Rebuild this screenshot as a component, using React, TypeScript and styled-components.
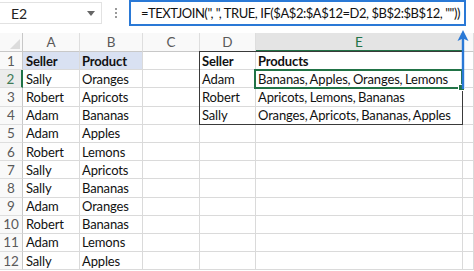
import React, { FC } from 'react'
import styled, { createGlobalStyle, css } from 'styled-components'

const GlobalStyle = createGlobalStyle`
  html, body {
    margin: 0;
    padding: 0;
    background: #ffffff;
  }
  body {
    font-family: Lato, 'Liberation Sans', sans-serif;
    width: 474px;
    height: 271px;
    overflow: hidden;
  }
`

const GREEN = '#217346'
const BLUE = '#2a79d6'
const GRID = '#dadada'

const Page = styled.div`
  position: relative;
  width: 474px;
  height: 271px;
  overflow: hidden;
`

const FormulaBar = styled.div`
  display: flex;
  align-items: center;
  height: 26px;
`

const NameBox = styled.div`
  display: flex;
  align-items: center;
  justify-content: space-between;
  box-sizing: border-box;
  width: 102px;
  height: 22px;
  padding: 0 6px 0 11px;
  border: 1px solid #e2e2e2;
  border-left: none;
  font-size: 14px;
  color: #222;
`

const Caret = styled.span`
  width: 0;
  height: 0;
  border-left: 4px solid transparent;
  border-right: 4px solid transparent;
  border-top: 5px solid #666;
`

const Dots = styled.div`
  display: flex;
  flex-direction: column;
  gap: 2px;
  width: 27px;
  align-items: center;
  & > span {
    width: 2px;
    height: 2px;
    background: #9a9a9a;
  }
`

const FormulaInput = styled.div`
  box-sizing: border-box;
  width: 337px;
  height: 26px;
  margin-top: -1px;
  border: 2px solid ${BLUE};
  padding-left: 10px;
  display: flex;
  align-items: center;
  font-size: 13px;
  letter-spacing: -0.45px;
  color: #111;
  white-space: nowrap;
`

const Sheet = styled.div`
  display: grid;
  grid-template-columns: 23px 57px 63px 57px 56px 207px 1fr;
  grid-template-rows: 19px repeat(12, 18.2px);
  margin-top: 7px;
`

const placed = css<{ $row: number; $col: number }>`
  grid-row: ${(p) => p.$row};
  grid-column: ${(p) => p.$col};
`

const Corner = styled.div`
  position: relative;
  grid-row: 1;
  grid-column: 1;
  background: #f9f9f9;
  border-right: 1px solid #c8c8c8;
  border-bottom: 1px solid #c8c8c8;
  &::after {
    content: '';
    position: absolute;
    right: 2px;
    bottom: 2px;
    width: 0;
    height: 0;
    border-left: 10px solid transparent;
    border-bottom: 10px solid #dcdcdc;
  }
`

const ColHead = styled.div<{ $row: number; $col: number; $active?: boolean }>`
  ${placed}
  display: flex;
  align-items: center;
  justify-content: center;
  background: #f9f9f9;
  border-right: 1px solid #dedede;
  border-bottom: 1px solid #c8c8c8;
  font-size: 13.5px;
  color: #5a5a5a;
  ${(p) =>
    p.$active &&
    css`
      background: #e4e4e4;
      color: ${GREEN};
      border-bottom: 2px solid ${GREEN};
    `}
`

const RowHead = styled.div<{ $row: number; $col: number; $active?: boolean }>`
  ${placed}
  display: flex;
  align-items: center;
  justify-content: center;
  background: #f9f9f9;
  border-right: 1px solid #c8c8c8;
  border-bottom: 1px solid #dedede;
  font-size: 13.5px;
  color: #5a5a5a;
  ${(p) =>
    p.$active &&
    css`
      background: #ececec;
      color: #3f7a57;
      border-right: 2px solid ${GREEN};
    `}
`

const Cell = styled.div<{
  $row: number
  $col: number
  $bold?: boolean
  $fill?: boolean
  $pad?: number
}>`
  ${placed}
  display: flex;
  align-items: center;
  padding-left: ${(p) => p.$pad ?? 2}px;
  border-right: 1px solid ${GRID};
  border-bottom: 1px solid ${GRID};
  font-size: 13px;
  letter-spacing: -0.15px;
  word-spacing: -0.7px;
  color: #111;
  white-space: nowrap;
  overflow: visible;
  background: ${(p) => (p.$fill ? '#d9e1f2' : '#ffffff')};
  font-weight: ${(p) => (p.$bold ? 700 : 400)};
`

const TableFrame = styled.div`
  grid-column: 5 / 7;
  grid-row: 2 / 6;
  margin: -1px 0 0 -1px;
  border: 1px solid #3a3a3a;
  pointer-events: none;
`

const ActiveCell = styled.div`
  position: relative;
  grid-column: 6 / 7;
  grid-row: 3 / 4;
  margin: -1px 0 -1px -2px;
  border: 2px solid ${GREEN};
  pointer-events: none;
`

const Handle = styled.span`
  position: absolute;
  right: -4px;
  bottom: -4px;
  width: 5px;
  height: 5px;
  background: ${GREEN};
  border: 1px solid #ffffff;
`

const Arrow = styled.svg`
  position: absolute;
  left: 457px;
  top: 30px;
`

const columns = ['A', 'B', 'C', 'D', 'E', '']

const sales: [string, string][] = [
  ['Sally', 'Oranges'],
  ['Robert', 'Apricots'],
  ['Adam', 'Bananas'],
  ['Adam', 'Apples'],
  ['Robert', 'Lemons'],
  ['Sally', 'Apricots'],
  ['Sally', 'Bananas'],
  ['Adam', 'Oranges'],
  ['Robert', 'Bananas'],
  ['Adam', 'Lemons'],
  ['Sally', 'Apples'],
]

const summary: [string, string][] = [
  ['Adam', 'Bananas, Apples, Oranges, Lemons'],
  ['Robert', 'Apricots, Lemons, Bananas'],
  ['Sally', 'Oranges, Apricots, Bananas, Apples'],
]

const App: FC = () => {
  const rows = Array.from({ length: 12 }, (_, i) => i + 1)

  return (
    <Page>
      <GlobalStyle />
      <FormulaBar>
        <NameBox>
          <span>E2</span>
          <Caret />
        </NameBox>
        <Dots>
          <span />
          <span />
          <span />
        </Dots>
        <FormulaInput>
          {'=TEXTJOIN(", ", TRUE, IF($A$2:$A$12=D2, $B$2:$B$12, ""))'}
        </FormulaInput>
      </FormulaBar>

      <Sheet>
        <Corner />
        {columns.map((c, i) => (
          <ColHead key={i} $row={1} $col={i + 2} $active={c === 'E'}>
            {c}
          </ColHead>
        ))}

        {rows.map((r) => {
          const header = r === 1
          const sale = sales[r - 2]
          const sum = summary[r - 2]
          const gr = r + 1
          return (
            <React.Fragment key={r}>
              <RowHead $row={gr} $col={1} $active={r === 2}>
                {r}
              </RowHead>
              <Cell $row={gr} $col={2} $bold={header} $fill={header} $pad={3}>
                {header ? 'Seller' : sale[0]}
              </Cell>
              <Cell $row={gr} $col={3} $bold={header} $fill={header}>
                {header ? 'Product' : sale[1]}
              </Cell>
              <Cell $row={gr} $col={4} />
              <Cell $row={gr} $col={5} $bold={header}>
                {header ? 'Seller' : sum ? sum[0] : ''}
              </Cell>
              <Cell $row={gr} $col={6} $bold={header}>
                {header ? 'Products' : sum ? sum[1] : ''}
              </Cell>
              <Cell $row={gr} $col={7} />
            </React.Fragment>
          )
        })}

        <TableFrame />
        <ActiveCell>
          <Handle />
        </ActiveCell>
      </Sheet>

      <Arrow width="12" height="60" viewBox="0 0 12 60">
        <path d="M6 0 L11.5 11 L6 8.5 L0.5 11 Z" fill={BLUE} />
        <rect x="4.8" y="8" width="2.4" height="51" fill={BLUE} />
      </Arrow>
    </Page>
  )
}

export default App
